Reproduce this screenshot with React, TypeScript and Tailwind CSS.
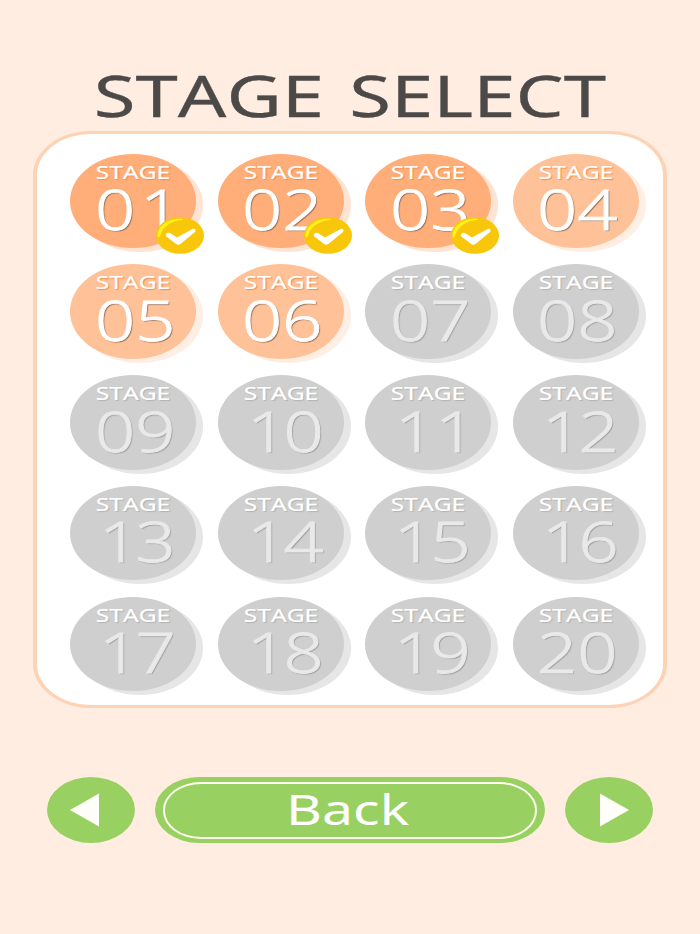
import clsx from "clsx";

type Status = "cleared" | "open" | "locked";

const stages = Array.from({ length: 20 }, (_, i) => {
  const status: Status = i < 3 ? "cleared" : i < 6 ? "open" : "locked";
  return { label: String(i + 1).padStart(2, "0"), status };
});

// The digit 1 sits a little to the right inside its cell
function digitSpacing(label: string) {
  if (label === "11") return "ml-[29.5px]";
  if (label === "01") return "ml-[24.5px] tracking-[4px]";
  if (label.startsWith("1")) return "ml-[29px] tracking-[-3px]";
  return "ml-[24.5px]";
}

function ClearBadge() {
  return (
    <svg
      className="absolute left-[86px] top-[63px] h-[37px] w-[48px]"
      viewBox="0 0 48 37"
    >
      <ellipse cx="24" cy="18.5" rx="24" ry="18.3" fill="#f8c60b" />
      <path
        d="M1.5 18.500C2 9 12 1.800 24 1.800c4.500 0 4 .9 1.500 1.200C14 4.500 7 9.500 4.500 18c-.8 3-3 3.500-3 .5z"
        fill="#fff21c"
      />
      <path
        d="M10.500 16.500c1.500-1.400 3.500-.8 4.700.3l5.800 3.700L36.500 12c2.500-.9 4 1 2.500 3L25 26.500c-1.700 1.500-3.500 1.500-5.200.3l-8.800-6.800c-1.400-1.100-1.500-2.500-.5-3.500z"
        fill="#fff"
      />
    </svg>
  );
}

function StageButton({ label, status }: { label: string; status: Status }) {
  const locked = status === "locked";

  return (
    <button className="relative h-[94.5px] w-[126px]">
      {/* Offset disc behind the button */}
      <span
        className={clsx(
          "absolute left-[7px] top-[4px] h-full w-full rounded-[50%]",
          status === "cleared" && "bg-[#ffe3d3]",
          status === "open" && "bg-[#ffeee4]",
          locked && "bg-[#e6e6e6]"
        )}
      />
      <span
        className={clsx(
          "relative flex h-full w-full flex-col items-center rounded-[50%] pt-[8px]",
          status === "cleared" && "bg-[#ffae79]",
          status === "open" && "bg-[#ffc298]",
          locked && "bg-[#cfcfcf]"
        )}
      >
        <span
          className={clsx(
            "h-[20px] scale-x-[1.33] text-[18.5px] leading-[20px] text-white [-webkit-text-stroke-width:0.2px]",
            locked
              ? "[text-shadow:1px_1px_1px_#b0b0b0]"
              : "[text-shadow:1px_1px_1px_#f58a48]"
          )}
        >
          STAGE
        </span>
        <span
          className={clsx(
            "mt-[2.5px] h-[50px] origin-left scale-x-[1.27] self-start text-[55.5px] font-light leading-[50px] [-webkit-text-stroke-width:0.8px]",
            digitSpacing(label),
            locked
              ? "text-[#e9e9e9] [text-shadow:1px_1px_1px_#9c9c9c]"
              : "text-white [text-shadow:1px_1px_1px_#8f6a52]"
          )}
        >
          {label}
        </span>
      </span>
      {status === "cleared" && <ClearBadge />}
    </button>
  );
}

function ArrowButton({ flip = false }: { flip?: boolean }) {
  return (
    <button className="flex h-[66px] w-[88px] items-center justify-center rounded-[50%] bg-[#98d162]">
      <svg
        className={clsx("h-[34px] w-[30px]", flip ? "ml-[10px]" : "-ml-[11px]")}
        viewBox="0 0 30 34"
      >
        <path d={flip ? "M1 .5v33L30 17z" : "M29 .5v33L0 17z"} fill="#fffef8" />
      </svg>
    </button>
  );
}

export default function App() {
  return (
    <div className="flex h-[934px] w-[700px] flex-col items-center overflow-hidden bg-[#ffede1] pt-[67px] font-['Noto_Sans',sans-serif] [font-kerning:none]">
      <h1 className="h-[57px] scale-x-[1.335] whitespace-nowrap text-[57px] leading-[57px] text-[#4c4a49] [-webkit-text-stroke-width:0.3px] [word-spacing:4px]">
        STAGE SELECT
      </h1>

      <main className="mt-[7px] h-[577px] w-[634px] rounded-[58px/44px] border-x-4 border-y-3 border-[#fdd3b6] bg-white pl-[33px] pt-[19.5px]">
        <div className="grid grid-cols-[repeat(4,147.6px)] auto-rows-[110.75px]">
          {stages.map((stage) => (
            <StageButton key={stage.label} {...stage} />
          ))}
        </div>
      </main>

      <nav className="mr-px mt-[69px] flex w-[606px] justify-between">
        <ArrowButton />
        <button className="h-[66px] w-[390px] rounded-[44px/33px] bg-[#98d162] px-[8px] py-[4.5px]">
          <span className="flex h-full items-center justify-center rounded-[38px/28px] border-x-[2.5px] border-y-2 border-[#fffef0]">
            <span className="-mt-[2px] mr-[3px] scale-x-[1.35] text-[41px] leading-[50px] text-white">
              Back
            </span>
          </span>
        </button>
        <ArrowButton flip />
      </nav>
    </div>
  );
}
